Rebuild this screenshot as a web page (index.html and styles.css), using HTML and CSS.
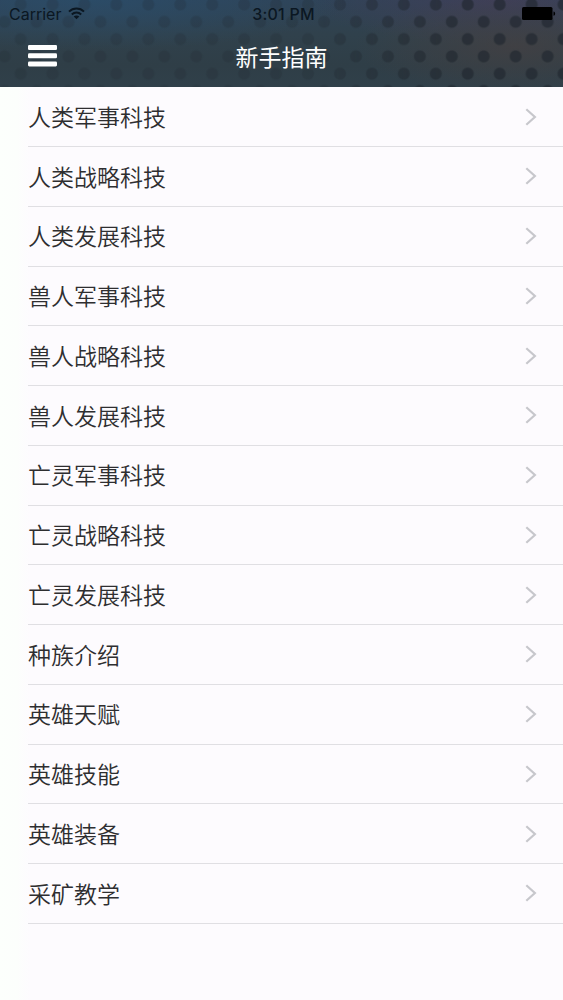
FILE: index.html
```html
<!DOCTYPE html>
<html lang="zh-CN">
<head>
<meta charset="utf-8">
<title>新手指南</title>
<link rel="stylesheet" href="styles.css">
</head>
<body>
<header class="header">
  <div class="status">
    <div class="carrier"><span>Carrier</span>
      <svg class="wifi" width="17" height="13" viewBox="0 0 17 13" fill="none" stroke="#0b1722" stroke-width="2"><path d="M1 4.6C5.2.4 11.8.4 16 4.6M3.8 7.5c2.7-2.6 6.7-2.6 9.4 0"/><path d="M8.5 12.2 5.7 9.5c1.6-1.4 4-1.4 5.6 0z" fill="#0b1722" stroke="none"/></svg>
    </div>
    <time class="clock">3:01 PM</time>
    <svg class="battery" width="34" height="14" viewBox="0 0 34 14"><rect width="30.5" height="13" rx="1.5"/><path d="M31.5 4.5c2.2.5 2.2 3.8 0 4.3z"/></svg>
  </div>
  <nav class="navbar">
    <svg class="menu" width="29" height="22" viewBox="0 0 29 22" fill="#fff"><rect width="29" height="5" rx="1.3"/><rect y="8.2" width="29" height="5" rx="1.3"/><rect y="16.4" width="29" height="5" rx="1.3"/></svg>
    <h1 class="title">新手指南</h1>
  </nav>
</header>
<svg class="defs" width="0" height="0"><symbol id="chevron" viewBox="0 0 12 18"><path d="M1.3 1.2 9.9 9l-8.6 7.8" fill="none" stroke="#c7c7cc" stroke-width="2.2"/></symbol></svg>
<ul class="list">
  <li class="row"><span>人类军事科技</span><svg class="chevron"><use href="#chevron"/></svg></li>
  <li class="row"><span>人类战略科技</span><svg class="chevron"><use href="#chevron"/></svg></li>
  <li class="row"><span>人类发展科技</span><svg class="chevron"><use href="#chevron"/></svg></li>
  <li class="row"><span>兽人军事科技</span><svg class="chevron"><use href="#chevron"/></svg></li>
  <li class="row"><span>兽人战略科技</span><svg class="chevron"><use href="#chevron"/></svg></li>
  <li class="row"><span>兽人发展科技</span><svg class="chevron"><use href="#chevron"/></svg></li>
  <li class="row"><span>亡灵军事科技</span><svg class="chevron"><use href="#chevron"/></svg></li>
  <li class="row"><span>亡灵战略科技</span><svg class="chevron"><use href="#chevron"/></svg></li>
  <li class="row"><span>亡灵发展科技</span><svg class="chevron"><use href="#chevron"/></svg></li>
  <li class="row"><span>种族介绍</span><svg class="chevron"><use href="#chevron"/></svg></li>
  <li class="row"><span>英雄天赋</span><svg class="chevron"><use href="#chevron"/></svg></li>
  <li class="row"><span>英雄技能</span><svg class="chevron"><use href="#chevron"/></svg></li>
  <li class="row"><span>英雄装备</span><svg class="chevron"><use href="#chevron"/></svg></li>
  <li class="row"><span>采矿教学</span><svg class="chevron"><use href="#chevron"/></svg></li>
</ul>
</body>
</html>
```
FILE: styles.css
```css
* { box-sizing: border-box; }
body {
  margin: 0;
  height: 1000px;
  overflow: hidden;
  background: linear-gradient(90deg, #fcfffc 0, #fcfefc 17px, #fdfbfe 30px);
  color: #2e2e30;
  font-family: Inter, "Noto Sans CJK SC", sans-serif;
}
.header {
  position: relative;
  height: 87px;
  overflow: hidden;
  background:
    radial-gradient(ellipse 160px 50px at 515px 46px, rgba(68, 64, 66, .8), transparent),
    radial-gradient(ellipse 190px 45px at 500px 0, rgba(67, 62, 88, .8), transparent),
    radial-gradient(ellipse 260px 50px at 90px 0, rgba(42, 78, 108, .75), transparent),
    linear-gradient(#2f4357 0, #30414c 40%, #2f3e47 75%, #30404a 100%);
}
.header::before {
  content: "";
  position: absolute;
  inset: 0;
  background-image:
    radial-gradient(circle at 16px 17.3px, #20272f 5.3px, transparent 6.6px),
    radial-gradient(circle at 16px 17.3px, #20272f 5.3px, transparent 6.6px);
  background-size: 31.95px 34.6px;
  background-position: 4.6px -12.8px, 20.6px 4.5px;
  -webkit-mask-image: linear-gradient(90deg, rgba(0,0,0,.2), rgba(0,0,0,.22) 55%, rgba(0,0,0,.65) 82%);
  mask-image: linear-gradient(90deg, rgba(0,0,0,.2), rgba(0,0,0,.22) 55%, rgba(0,0,0,.65) 82%);
}
.status {
  position: relative;
  display: grid;
  grid-template-columns: 1fr auto 1fr;
  align-items: center;
  height: 28px;
  padding: 0 8px 0 9px;
  color: #0b1722;
  font-size: 16px;
}
.carrier { display: flex; align-items: center; gap: 7px; }
.wifi { margin-top: -2px; }
.clock { font-weight: 500; font-size: 16px; padding-left: 3px; letter-spacing: .2px; }
.battery { justify-self: end; fill: #000; margin-right: -1px; }
.navbar {
  position: relative;
  display: grid;
  grid-template-columns: 1fr auto 1fr;
  align-items: center;
  height: 59px;
  padding: 0 28px;
}
.menu { margin-top: -3px; }
.title {
  margin: -4px 0 0;
  color: #fff;
  font: 400 23px/34px "Noto Sans CJK SC", sans-serif;
}
.defs { position: absolute; }
.list { list-style: none; margin: 0; padding: .3px 0 0 28px; }
.row {
  display: flex;
  align-items: center;
  justify-content: space-between;
  height: 59.75px;
  padding-right: 26.5px;
  border-bottom: 1px solid #e0dfe3;
  font-size: 23px;
  font-weight: 350;
  line-height: 34px;
}
.row span { padding-top: 2.6px; }
.chevron { width: 12px; height: 18px; }
```
